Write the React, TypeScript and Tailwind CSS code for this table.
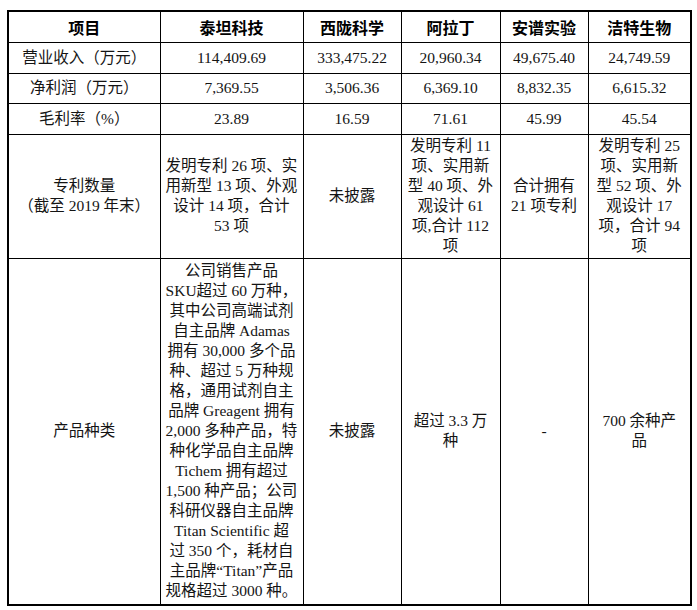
import React from 'react';

type Cell = string | string[];

const body = "font-['Liberation_Serif','Noto_Sans_CJK_SC',serif]";

const headers = ['项目', '泰坦科技', '西陇科学', '阿拉丁', '安谱实验', '洁特生物'];

const rows: { h: string; cells: Cell[] }[] = [
  {
    h: 'h-[31px]',
    cells: ['营业收入（万元）', '114,409.69', '333,475.22', '20,960.34', '49,675.40', '24,749.59'],
  },
  {
    h: 'h-[30px]',
    cells: ['净利润（万元）', '7,369.55', '3,506.36', '6,369.10', '8,832.35', '6,615.32'],
  },
  {
    h: 'h-[31px]',
    cells: ['毛利率（%）', '23.89', '16.59', '71.61', '45.99', '45.54'],
  },
  {
    h: 'h-[124px]',
    cells: [
      ['专利数量', '（截至 2019 年末）'],
      ['发明专利 26 项、实', '用新型 13 项、外观', '设计 14 项，合计', '53 项'],
      '未披露',
      ['发明专利 11', '项、实用新', '型 40 项、外', '观设计 61', '项,合计 112', '项'],
      ['合计拥有', '21 项专利'],
      ['发明专利 25', '项、实用新', '型 52 项、外', '观设计 17', '项，合计 94', '项'],
    ],
  },
  {
    h: 'h-[347px]',
    cells: [
      '产品种类',
      [
        '公司销售产品',
        'SKU超过 60 万种，',
        '其中公司高端试剂',
        '自主品牌 Adamas',
        '拥有 30,000 多个品',
        '种、超过 5 万种规',
        '格，通用试剂自主',
        '品牌 Greagent 拥有',
        '2,000 多种产品，特',
        '种化学品自主品牌',
        'Tichem 拥有超过',
        '1,500 种产品；公司',
        '科研仪器自主品牌',
        'Titan Scientific 超',
        '过 350 个，耗材自',
        '主品牌“Titan”产品',
        '规格超过 3000 种。',
      ],
      '未披露',
      ['超过 3.3 万', '种'],
      '-',
      ['700 余种产', '品'],
    ],
  },
];

function Lines({ value }: { value: Cell }) {
  const list = Array.isArray(value) ? value : [value];
  return (
    <div className="flex flex-col items-center">
      {list.map((line, i) => (
        <span key={i} className="whitespace-nowrap leading-[20px]">
          {line}
        </span>
      ))}
    </div>
  );
}

export default function App() {
  return (
    <div className="w-[697px] h-[610px] bg-white pt-[10px] pl-[7px]">
      <table className="w-[683px] table-fixed border-collapse border-2 border-black">
        <colgroup>
          <col className="w-[152px]" />
          <col className="w-[143px]" />
          <col className="w-[98px]" />
          <col className="w-[99px]" />
          <col className="w-[88px]" />
          <col className="w-[103px]" />
        </colgroup>
        <thead>
          <tr className="h-[31px]">
            {headers.map((t) => (
              <th
                key={t}
                className="border border-black p-0 text-center align-middle font-['Noto_Sans_CJK_SC',sans-serif] text-[16px] font-bold text-black"
              >
                {t}
              </th>
            ))}
          </tr>
        </thead>
        <tbody>
          {rows.map((r, ri) => (
            <tr key={ri} className={r.h}>
              {r.cells.map((c, ci) => (
                <td
                  key={ci}
                  className={`border border-black p-0 text-center align-middle text-[15.5px] text-[#141414] ${body}`}
                >
                  <Lines value={c} />
                </td>
              ))}
            </tr>
          ))}
        </tbody>
      </table>
    </div>
  );
}
